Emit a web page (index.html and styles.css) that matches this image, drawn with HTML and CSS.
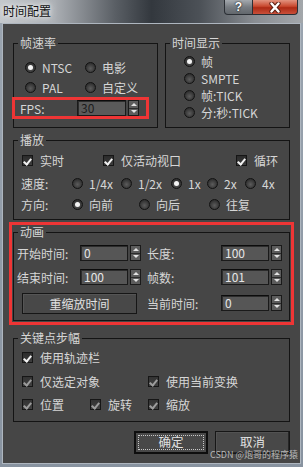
FILE: index.html
```html
<!DOCTYPE html>
<html lang="zh-CN">
<head>
  <meta charset="UTF-8">
  <meta name="viewport" content="width=device-width, initial-scale=1.0">
  <title>时间配置</title>
  <link rel="stylesheet" href="styles.css">
</head>
<body>
  <div class="window">
    <div class="titlebar">
      <span class="title">时间配置</span>
      <div class="caption-btns">
        <span class="cap-btn help">?</span>
        <span class="cap-btn close">
          <svg width="14" height="11" viewBox="0 0 14 11">
            <path d="M3.5 1.5 L10.5 9.5 M10.5 1.5 L3.5 9.5" stroke="#5a1c10" stroke-width="4.2" stroke-linecap="round"/>
            <path d="M3.5 1.5 L10.5 9.5 M10.5 1.5 L3.5 9.5" stroke="#ffffff" stroke-width="2.4" stroke-linecap="round"/>
          </svg>
        </span>
      </div>
    </div>

    <div class="panel">
      <div class="top-row">
        <fieldset class="group g-rate">
          <legend>帧速率</legend>
          <div class="body">
            <div class="radio-grid">
              <span class="opt"><span class="radio on"></span>NTSC</span>
              <span class="opt"><span class="radio"></span>电影</span>
              <span class="opt"><span class="radio"></span>PAL</span>
              <span class="opt"><span class="radio"></span>自定义</span>
            </div>
            <div class="fps-row mark">
              <span class="fps-label">FPS:</span>
              <span class="spin-field">
                <span class="field dim">30</span>
                <span class="spin"><i class="up"></i><i class="down"></i></span>
              </span>
            </div>
          </div>
        </fieldset>

        <fieldset class="group g-display">
          <legend>时间显示</legend>
          <div class="body">
            <span class="opt"><span class="radio on"></span>帧</span>
            <span class="opt"><span class="radio"></span>SMPTE</span>
            <span class="opt"><span class="radio"></span>帧:TICK</span>
            <span class="opt"><span class="radio"></span>分:秒:TICK</span>
          </div>
        </fieldset>
      </div>

      <fieldset class="group g-play">
        <legend>播放</legend>
        <div class="body">
          <div class="row cb-row">
            <span class="opt w81"><span class="check"></span>实时</span>
            <span class="opt w133"><span class="check"></span>仅活动视口</span>
            <span class="opt"><span class="check"></span>循环</span>
          </div>
          <div class="row speed-row">
            <span class="row-label">速度:</span>
            <span class="opt w49"><span class="radio"></span>1/4x</span>
            <span class="opt w50"><span class="radio"></span>1/2x</span>
            <span class="opt w36"><span class="radio on"></span>1x</span>
            <span class="opt w38"><span class="radio"></span>2x</span>
            <span class="opt"><span class="radio"></span>4x</span>
          </div>
          <div class="row dir-row">
            <span class="row-label">方向:</span>
            <span class="opt w67"><span class="radio on"></span>向前</span>
            <span class="opt w70"><span class="radio"></span>向后</span>
            <span class="opt"><span class="radio"></span>往复</span>
          </div>
        </div>
      </fieldset>

      <div class="mark anim-mark">
        <fieldset class="group g-anim">
          <legend>动画</legend>
          <div class="body">
            <div class="row">
              <span class="field-label">开始时间:</span>
              <span class="spin-field">
                <span class="field">0</span>
                <span class="spin"><i class="up"></i><i class="down"></i></span>
              </span>
              <span class="field-label second">长度:</span>
              <span class="spin-field">
                <span class="field">100</span>
                <span class="spin"><i class="up"></i><i class="down"></i></span>
              </span>
            </div>
            <div class="row row-2">
              <span class="field-label">结束时间:</span>
              <span class="spin-field">
                <span class="field">100</span>
                <span class="spin"><i class="up"></i><i class="down"></i></span>
              </span>
              <span class="field-label second">帧数:</span>
              <span class="spin-field">
                <span class="field">101</span>
                <span class="spin"><i class="up"></i><i class="down"></i></span>
              </span>
            </div>
            <div class="row row-3">
              <span class="btn rescale">重缩放时间</span>
              <span class="field-label second">当前时间:</span>
              <span class="spin-field">
                <span class="field">0</span>
                <span class="spin"><i class="up"></i><i class="down"></i></span>
              </span>
            </div>
          </div>
        </fieldset>
      </div>

      <fieldset class="group g-keys">
        <legend>关键点步幅</legend>
        <div class="body">
          <div class="row">
            <span class="opt"><span class="check"></span>使用轨迹栏</span>
          </div>
          <div class="row row-2">
            <span class="opt w126"><span class="check off"></span>仅选定对象</span>
            <span class="opt"><span class="check off"></span>使用当前变换</span>
          </div>
          <div class="row row-3">
            <span class="opt w68"><span class="check off"></span>位置</span>
            <span class="opt w58"><span class="check off"></span>旋转</span>
            <span class="opt"><span class="check off"></span>缩放</span>
          </div>
        </div>
      </fieldset>

      <div class="actions">
        <span class="btn btn-ok">确定</span>
        <span class="btn btn-cancel">取消</span>
      </div>
    </div>

    <span class="watermark">CSDN @炮哥的程序猿</span>
  </div>
</body>
</html>
```

FILE: styles.css
```css
:root {
  --panel: #464646;
  --text: #d6d6d6;
  --line: #141414;
  --mark: #ee3535;
}

* {
  box-sizing: border-box;
  margin: 0;
  padding: 0;
}

body {
  width: 303px;
  height: 467px;
  overflow: hidden;
  font-family: "Noto Sans CJK SC", "Liberation Sans", sans-serif;
  font-size: 12px;
  color: var(--text);
  background: #8f9aa6;
}

.window {
  position: relative;
  width: 303px;
  height: 467px;
  background: linear-gradient(#9ba5b0, #8893a0);
}

/* title bar */
.titlebar {
  height: 23px;
  display: flex;
  justify-content: space-between;
  background: linear-gradient(90deg, #c4c8cc 0%, #abafb4 18%, #5a5f65 38%, #33383e 50%, #4c5157 66%, #898d92 84%, #a3a7ab 100%);
}

.title {
  padding: 3px 0 0 3px;
  line-height: 16px;
  color: #111;
  text-shadow: 0 0 5px #fff, 0 0 9px #e8eaec;
}

.caption-btns {
  display: flex;
  margin-right: 5px;
  height: 15px;
}

.cap-btn {
  height: 15px;
  display: flex;
  align-items: center;
  justify-content: center;
  border: 1px solid #2b2f35;
  border-top: none;
}

.help {
  width: 29px;
  border-radius: 0 0 0 4px;
  background: linear-gradient(#a4a9ae, #777c82 50%, #62676c);
  color: #fff;
  font: bold 12px "Liberation Sans", sans-serif;
  text-shadow: 0 0 2px #222, 0 0 1px #222;
}

.close {
  width: 45px;
  border-left: none;
  border-radius: 0 0 4px 0;
  background: linear-gradient(#e2937f, #c9492f 45%, #ad2a14 55%, #c9503a);
}

/* client area */
.panel {
  margin: 0 2px;
  height: 441px;
  border: 1px solid #aeb6bf;
  background: var(--panel);
  padding: 12px 10px 0;
  display: flex;
  flex-direction: column;
}

.top-row {
  display: flex;
  gap: 7px;
}

.group {
  border: 1px solid var(--line);
  padding: 0;
  min-width: 0;
}

.group legend {
  margin-left: 4px;
  padding: 0 2px;
  height: 14px;
  line-height: 14px;
}

.opt {
  display: flex;
  align-items: center;
  gap: 6px;
  white-space: nowrap;
}

.radio {
  width: 11px;
  height: 11px;
  flex: none;
  border-radius: 50%;
  border: 1px solid #121212;
  background: radial-gradient(circle at 50% 60%, #5c5c5c 0%, #3a3a3a 55%, #222 100%);
  display: flex;
  align-items: center;
  justify-content: center;
}

.radio.on::after {
  content: "";
  width: 5px;
  height: 5px;
  border-radius: 50%;
  background: #f4f4f4;
}

.check {
  width: 11px;
  height: 11px;
  flex: none;
  border: 1px solid #161616;
  background: linear-gradient(#2b2b2b, #3d3d3d);
  display: flex;
  justify-content: center;
}

.check::after {
  content: "";
  width: 3px;
  height: 6px;
  margin-top: 1px;
  border-right: 2px solid #f2f2f2;
  border-bottom: 2px solid #f2f2f2;
  transform: rotate(40deg);
}

.check.off {
  background: linear-gradient(#333, #404040);
}

.check.off::after {
  border-color: #9c9c9c;
}

.row {
  display: flex;
  align-items: center;
  height: 20px;
}

/* spinner fields */
.spin-field {
  display: flex;
  align-items: center;
  gap: 2px;
}

.field {
  width: 48px;
  height: 16px;
  padding-left: 3px;
  line-height: 14px;
  background: #565656;
  border: 1px solid #1a1a1a;
  border-top-color: #0c0c0c;
  box-shadow: inset 1px 1px 0 #2c2c2c;
  color: #e6e6e6;
}

.field.dim {
  width: 49px;
  background: #5a5a5a;
  color: #1c1c1c;
}

.spin {
  width: 11px;
  height: 16px;
  display: flex;
  flex-direction: column;
  border: 1px solid #1a1a1a;
  background: #5c5c5c;
}

.spin i {
  flex: 1;
  display: flex;
  align-items: center;
  justify-content: center;
}

.spin i + i {
  border-top: 1px solid #2b2b2b;
}

.spin .up::after,
.spin .down::after {
  content: "";
  border-left: 3px solid transparent;
  border-right: 3px solid transparent;
}

.spin .up::after {
  border-bottom: 3px solid #e2e2e2;
}

.spin .down::after {
  border-top: 3px solid #e2e2e2;
}

/* red annotation boxes */
.mark {
  border: 3px solid var(--mark);
}

/* frame rate */
.g-rate {
  width: 145px;
}

.g-rate .body {
  padding: 7px 0 8px 11px;
}

.radio-grid {
  display: grid;
  grid-template-columns: 60px auto;
  grid-auto-rows: 20px;
  align-items: center;
}

.fps-row {
  display: flex;
  align-items: center;
  width: 137px;
  height: 22px;
  margin-left: -13px;
  padding-left: 5px;
}

.fps-label {
  width: 57px;
}

/* time display */
.g-display {
  width: 125px;
}

.g-display .body {
  padding: 3px 0 6px 18px;
  display: flex;
  flex-direction: column;
}

.g-display .opt {
  height: 17px;
}

/* playback */
.g-play {
  margin-top: 5px;
}

.g-play .body {
  padding: 3px 0 5px 7px;
}

.cb-row {
  padding-left: 1px;
}

.cb-row .opt {
  gap: 7px;
}

.speed-row {
  margin-top: 2px;
  height: 22px;
}

.row-label {
  width: 51px;
}

.w36 { width: 36px; }
.w38 { width: 38px; }
.w49 { width: 49px; }
.w50 { width: 50px; }
.w58 { width: 58px; }
.w67 { width: 67px; }
.w68 { width: 68px; }
.w70 { width: 70px; }
.w81 { width: 81px; }
.w126 { width: 126px; }
.w133 { width: 133px; }

/* animation */
.anim-mark {
  margin: 2px -4px 0;
  padding: 0 1px 1px;
}

.g-anim .body {
  padding: 4px 0 6px 3px;
}

.field-label {
  width: 63px;
  white-space: nowrap;
}

.field-label.second {
  width: 74px;
  margin-left: 6px;
}

.g-anim .row-2 {
  margin-top: 4px;
}

.g-anim .row-3 {
  margin-top: 5px;
  height: 22px;
}

.btn {
  display: flex;
  align-items: center;
  justify-content: center;
  color: #e0e0e0;
  background: #484848;
  border: 1px solid #161616;
}

.rescale {
  width: 115px;
  height: 21px;
  margin-left: 5px;
  margin-right: 4px;
  box-shadow: inset 1px 1px 0 #555;
}

/* key steps */
.g-keys {
  margin-top: 6px;
}

.g-keys .body {
  padding: 2px 0 7px 8px;
}

.g-keys .opt {
  gap: 7px;
}

.g-keys .row-2 {
  margin-top: 4px;
}

.g-keys .row-3 {
  margin-top: 3px;
}

/* dialog buttons */
.actions {
  display: flex;
  justify-content: flex-end;
  gap: 7px;
  margin-top: 9px;
}

.actions .btn {
  height: 23px;
  font-size: 12.5px;
  line-height: 13px;
  padding-bottom: 3px;
}

.btn-ok {
  width: 74px;
  border: 2px solid #0e0e0e;
  outline: 1px dotted #c8c8c8;
  outline-offset: -5px;
}

.btn-cancel {
  width: 75px;
  box-shadow: inset -1px -1px 0 #262626, inset 1px 1px 0 #525252;
}

.watermark {
  position: absolute;
  left: 210px;
  top: 450px;
  font-size: 9px;
  line-height: 9px;
  white-space: nowrap;
  color: rgba(215, 215, 215, 0.8);
}
```
